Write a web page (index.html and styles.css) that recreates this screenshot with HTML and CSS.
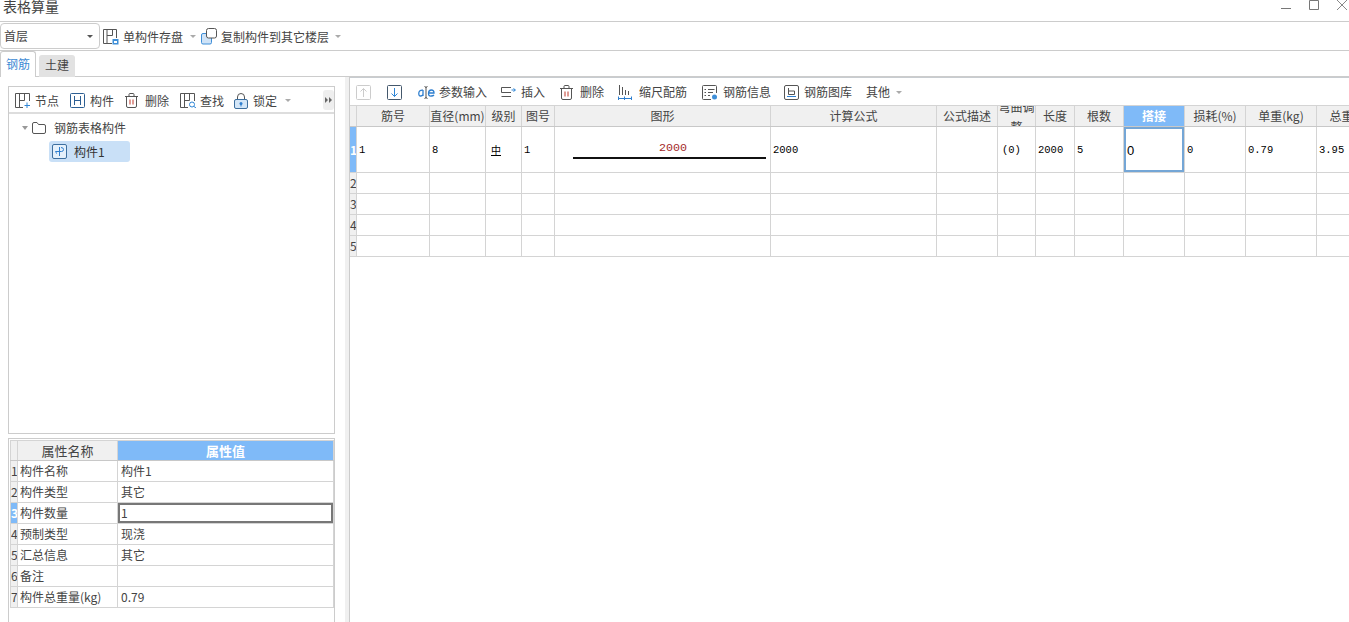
FILE: index.html
```html
<!DOCTYPE html>
<html lang="zh-CN">
<head>
<meta charset="utf-8">
<title>表格算量</title>
<link rel="stylesheet" href="styles.css">
</head>
<body>
<header class="titlebar">
  <span class="title">表格算量</span>
  <div class="winbtns">
    <svg class="win" width="12" height="12" viewBox="0 0 12 12"><path d="M1 8.500h10" stroke="#777" fill="none"/></svg>
    <svg class="win" width="12" height="12" viewBox="0 0 12 12"><path d="M1.500 0.500h9v9h-9z" stroke="#777" fill="none"/></svg>
    <svg class="win" width="12" height="12" viewBox="0 0 12 12"><path d="M1 0l10 10M11 0L1 10" stroke="#888" fill="none"/></svg>
  </div>
</header>
<div class="topbar">
  <div class="select"><span>首层</span><i class="caret dark"></i></div>
  <div class="tool t-save">
    <svg width="17" height="17" viewBox="0 0 17 17"><path d="M10 15.500H1.500V1.500H14.500V10M5 1.500V15M5 7.500H10.500V1.500" stroke="#555" fill="none"/><rect x="10.500" y="11" width="6" height="5.500" fill="#3f8fd8"/><rect x="12" y="13" width="3" height="2" fill="#fff"/></svg>
    <span>单构件存盘</span><i class="caret"></i>
  </div>
  <div class="tool t-copy">
    <svg width="17" height="17" viewBox="0 0 17 17"><rect x="0.500" y="5.500" width="10" height="10.500" rx="1.500" fill="#cfe3f7" stroke="#3f8fd8"/><rect x="5.500" y="0.500" width="10" height="9.500" rx="2" fill="#fff" stroke="#555"/></svg>
    <span>复制构件到其它楼层</span><i class="caret"></i>
  </div>
</div>
<nav class="tabs">
  <div class="tab active">钢筋</div>
  <div class="tab">土建</div>
</nav>
<main class="work">
  <aside class="left">
    <section class="treebox">
      <div class="treebar">
        <div class="tool">
          <svg width="15" height="15" viewBox="0 0 15 15"><path d="M8 14.500H0.500V0.500H14.500V8M4.500 0.500V14M4.500 7.500H9.500V0.500" stroke="#555" fill="none"/><path d="M12 9.500V15M9.500 12.500H15" stroke="#2f86d6" fill="none"/></svg>
          <span>节点</span>
        </div>
        <div class="tool">
          <svg width="15" height="15" viewBox="0 0 15 15"><rect x="0.500" y="0.500" width="14" height="14" rx="1" stroke="#2d5f93" fill="none"/><path d="M4.500 3V12M10.500 3V12M4.500 7.500H10.500" stroke="#2d5f93" fill="none"/></svg>
          <span>构件</span>
        </div>
        <div class="tool tool-del">
          <svg width="13" height="15" viewBox="0 0 13 15"><path d="M0 3.500H13M4 3.500V1.500Q4 .5 5 .5H8Q9 .5 9 1.500V3.500M1.500 3.500V13Q1.500 14.500 3 14.500H10Q11.500 14.500 11.500 13V3.500" stroke="#555" fill="none"/><path d="M5 6.500V11.500M8 6.500V11.500" stroke="#c0392b" fill="none"/></svg>
          <span>删除</span>
        </div>
        <div class="tool tool-find">
          <svg width="16" height="15" viewBox="0 0 16 15"><path d="M8 14.500H0.500V0.500H14.500V8M4.500 0.500V14M4.500 7.500H9.500V0.500" stroke="#555" fill="none"/><circle cx="12" cy="11.500" r="2.500" stroke="#2f86d6" fill="#fff"/><path d="M14 13.500L16 15" stroke="#2f86d6"/></svg>
          <span>查找</span>
        </div>
        <div class="tool">
          <svg width="14" height="16" viewBox="0 0 14 16"><path d="M3.500 7V4Q3.500 .5 7 .5T10.500 4V7" stroke="#555" fill="none"/><rect x="0.500" y="6.500" width="13" height="9" rx="1.500" fill="#d3e6f8" stroke="#3d6f9f"/><circle cx="7" cy="10.500" r="1.500" fill="#2f7fcf"/><path d="M7 11v2.500" stroke="#2f7fcf"/></svg>
          <span>锁定</span><i class="caret"></i>
        </div>
        <div class="more"><i></i><i></i></div>
      </div>
      <div class="tree">
        <div class="node root">
          <i class="caret tree-caret"></i>
          <svg width="14" height="12" viewBox="0 0 14 12"><path d="M0.500 2Q.5 .5 2 .5H5L6.500 2.500H12Q13.500 2.500 13.500 4V10Q13.500 11.500 12 11.500H2Q.5 11.500 .5 10Z" stroke="#555" fill="none"/></svg>
          <span class="root-label">钢筋表格构件</span>
        </div>
        <div class="node leaf">
          <svg width="15" height="15" viewBox="0 0 15 15"><rect x="0.500" y="0.500" width="14" height="14" rx="1.500" stroke="#3d6f9f" fill="#e4f0fb"/><path d="M7.500 3V12M3.500 7.500H9.500Q11.500 7.500 11.500 5.500T9 3.500M5 9.500Q3.500 8.500 3.500 7.500" stroke="#2f7fcf" fill="none"/></svg>
          <span>构件1</span>
        </div>
      </div>
    </section>
    <section class="propbox">
      <table class="grid props">
        <colgroup><col class="p-h"><col class="p-n"><col class="p-v"></colgroup>
        <thead>
          <tr><th></th><th>属性名称</th><th class="sel">属性值</th></tr>
        </thead>
        <tbody>
          <tr><th>1</th><td>构件名称</td><td class="v">构件1</td></tr>
          <tr><th>2</th><td>构件类型</td><td class="v">其它</td></tr>
          <tr><th class="sel">3</th><td>构件数量</td><td class="v cur-g">1</td></tr>
          <tr><th>4</th><td>预制类型</td><td class="v">现浇</td></tr>
          <tr><th>5</th><td>汇总信息</td><td class="v">其它</td></tr>
          <tr><th>6</th><td>备注</td><td class="v"></td></tr>
          <tr><th>7</th><td>构件总重量(kg)</td><td class="v">0.79</td></tr>
        </tbody>
      </table>
    </section>
  </aside>
  <div class="splitter"></div>
  <section class="right">
    <div class="rbar">
      <svg class="b-up" width="15" height="15" viewBox="0 0 15 15"><rect x="0.500" y="0.500" width="14" height="14" rx="1" stroke="#ccc" fill="none"/><path d="M7.500 12V3.500M4.500 6.500l3-3 3 3" stroke="#ccc" fill="none"/></svg>
      <svg class="b-down" width="15" height="15" viewBox="0 0 15 15"><rect x="0.500" y="0.500" width="14" height="14" rx="1" stroke="#44586c" fill="none"/><path d="M7.500 3V11.500M4.500 8.500l3 3 3-3" stroke="#2f86d6" fill="none"/></svg>
      <div class="tool b-param">
        <svg width="17" height="13" viewBox="0 0 17 13"><path d="M5 4.200Q1 3.800 .8 7T2.800 10Q4.300 10 5 8.500V4M5 8.500V10" stroke="#2f7fcf" stroke-width="1.300" fill="none"/><path d="M6.500 .5Q8 .5 8 2V11Q8 12.500 6.500 12.500M9.500 .5Q8 .5 8 2M9.500 12.500Q8 12.500 8 11" stroke="#555" fill="none"/><path d="M10.500 7H16Q16 4 13.300 4T10.500 7.200 13.300 10Q15 10 16 9" stroke="#2f7fcf" stroke-width="1.300" fill="none"/></svg>
        <span>参数输入</span>
      </div>
      <div class="tool b-ins">
        <svg width="15" height="13" viewBox="0 0 15 13"><path d="M10 1.500H.5V6.500H10M.5 10.500H10" stroke="#555" fill="none"/><path d="M10.500 4H14M12.500 2.500L14.500 4L12.500 5.500" stroke="#2f86d6" fill="none"/></svg>
        <span>插入</span>
      </div>
      <div class="tool b-del">
        <svg width="13" height="15" viewBox="0 0 13 15"><path d="M0 3.500H13M4 3.500V1.500Q4 .5 5 .5H8Q9 .5 9 1.500V3.500M1.500 3.500V13Q1.500 14.500 3 14.500H10Q11.500 14.500 11.500 13V3.500" stroke="#555" fill="none"/><path d="M5 6.500V11.500M8 6.500V11.500" stroke="#c0392b" fill="none"/></svg>
        <span>删除</span>
      </div>
      <div class="tool b-scale">
        <svg width="14" height="15" viewBox="0 0 14 15"><path d="M1.500 0V10M4.500 2V10M7.500 5V10M10.500 6V10" stroke="#555" fill="none"/><path d="M0 13.500H14M.5 11.500V15M6.500 11.500V15M13.500 11.500V15" stroke="#2f7fcf" fill="none"/></svg>
        <span>缩尺配筋</span>
      </div>
      <div class="tool b-info">
        <svg width="16" height="15" viewBox="0 0 16 15"><path d="M9 14.500H1.500Q.5 14.500 .5 13.500V1.500Q.5 .5 1.500 .5H13.500Q14.500 .5 14.500 1.500V8M2.500 4.500H4M6 4.500H12.500M2.500 7.500H4M6 7.500H11M2.500 10.500H4M6 10.500H8" stroke="#555" fill="none"/><circle cx="12.500" cy="12" r="2.500" fill="#3f8fd8"/></svg>
        <span>钢筋信息</span>
      </div>
      <div class="tool b-lib">
        <svg width="15" height="15" viewBox="0 0 15 15"><rect x="0.500" y="0.500" width="14" height="14" rx="1.500" stroke="#555" fill="none"/><path d="M4.500 3V9.500H10.500V6H4.500" stroke="#555" fill="none"/><path d="M3 11.500H12" stroke="#2f7fcf"/></svg>
        <span>钢筋图库</span>
      </div>
      <div class="tool b-other"><span>其他</span><i class="caret"></i></div>
    </div>
    <table class="grid bars">
      <colgroup>
        <col class="c-h"><col class="c1"><col class="c2"><col class="c3"><col class="c4"><col class="c5"><col class="c6"><col class="c7"><col class="c8"><col class="c9"><col class="c10"><col class="c11"><col class="c12"><col class="c13"><col class="c14">
      </colgroup>
      <thead>
        <tr>
          <th></th><th>筋号</th><th>直径(mm)</th><th>级别</th><th>图号</th><th>图形</th><th>计算公式</th><th>公式描述</th>
          <th><div class="clip"><div class="clip-text">弯曲调整</div></div></th>
          <th>长度</th><th>根数</th><th class="sel">搭接</th><th>损耗(%)</th><th>单重(kg)</th><th>总重</th>
        </tr>
      </thead>
      <tbody>
        <tr class="first">
          <th class="sel">1</th><td>1</td><td>8</td><td class="lvl">&#x4E2D;</td><td>1</td>
          <td class="shape"><div class="dim">2000</div><div class="rule"></div></td>
          <td>2000</td><td></td><td class="mid">(0)</td><td>2000</td><td>5</td><td class="cur-b">0</td><td>0</td><td>0.79</td><td>3.95</td>
        </tr>
        <tr><th>2</th><td></td><td></td><td></td><td></td><td></td><td></td><td></td><td></td><td></td><td></td><td></td><td></td><td></td><td></td></tr>
        <tr><th>3</th><td></td><td></td><td></td><td></td><td></td><td></td><td></td><td></td><td></td><td></td><td></td><td></td><td></td><td></td></tr>
        <tr><th>4</th><td></td><td></td><td></td><td></td><td></td><td></td><td></td><td></td><td></td><td></td><td></td><td></td><td></td><td></td></tr>
        <tr><th>5</th><td></td><td></td><td></td><td></td><td></td><td></td><td></td><td></td><td></td><td></td><td></td><td></td><td></td><td></td></tr>
      </tbody>
    </table>
  </section>
</main>
</body>
</html>
```
FILE: styles.css
```css
* { box-sizing: border-box; }
html, body { margin: 0; height: 622px; overflow: hidden; }
body {
  display: flex;
  flex-direction: column;
  background: #fff;
  color: #444;
  font: 12px/16px "Noto Sans CJK SC", "Liberation Sans", sans-serif;
}
.titlebar {
  height: 22px;
  flex: none;
  display: flex;
  justify-content: space-between;
  border-bottom: 1px solid #ccc;
  overflow: hidden;
}
.title { font-size: 14px; line-height: 12px; padding-left: 3px; }
.winbtns { display: flex; gap: 16px; padding-right: 1px; align-items: flex-start; }
.win { display: block; }
.topbar {
  height: 29px;
  flex: none;
  display: flex;
  align-items: center;
  border-bottom: 1px solid #ccc;
}
.select {
  width: 100px;
  height: 26px;
  border: 1px solid #ccc;
  border-radius: 4px;
  display: flex;
  align-items: center;
  justify-content: space-between;
  padding: 0 6px 0 3px;
  margin-right: 2px;
}
.tool { display: flex; align-items: center; gap: 4px; white-space: nowrap; }
.tool svg { flex: none; }
.t-save, .t-copy { padding-top: 1px; }
.t-save { margin-right: 5px; }
.t-save .caret { margin-left: 3px; }
.t-copy { gap: 3px; }
.t-copy .caret { margin-left: 3px; }
.caret {
  display: inline-block;
  width: 0;
  height: 0;
  border-left: 3px solid transparent;
  border-right: 3px solid transparent;
  border-top: 3px solid #aaa;
}
.caret.dark { border-top-color: #555; }
.tabs {
  height: 26px;
  flex: none;
  display: flex;
  align-items: flex-end;
  gap: 3px;
  border-bottom: 1px solid #ccc;
}
.tab {
  width: 36px;
  height: 22px;
  background: #e2e2e2;
  border-radius: 3px 3px 0 0;
  text-align: center;
  line-height: 20px;
  font-size: 12px;
  margin-bottom: -1px;
}
.tab.active {
  height: 26px;
  background: #fff;
  color: #3d8ad4;
  border: 1px solid #ccc;
  border-bottom: 0;
  line-height: 24px;
  position: relative;
}
.work { flex: 1; display: flex; min-height: 0; }
.left {
  width: 345px;
  flex: none;
  padding: 9px 10px 0 8px;
  display: flex;
  flex-direction: column;
  gap: 4px;
}
.treebox {
  height: 348px;
  flex: none;
  border: 1px solid #ccc;
}
.treebar {
  height: 27px;
  display: flex;
  align-items: center;
  padding: 2px 0 0 6px;
  gap: 11px;
  border-bottom: 2px solid #ddd;
  position: relative;
}
.treebar .caret { margin-left: 3px; }
.treebar .tool { gap: 5px; }
.treebar .tool-del { gap: 7px; }
.treebar .tool-find { gap: 4px; margin-right: -1px; }
.more {
  position: absolute;
  right: 0;
  top: 3px;
  width: 11px;
  height: 20px;
  background: #eee;
  border-radius: 3px;
  display: flex;
  align-items: center;
  justify-content: center;
  gap: 1px;
}
.more i {
  width: 0;
  height: 0;
  border-top: 3px solid transparent;
  border-bottom: 3px solid transparent;
  border-left: 3px solid #666;
}
.tree { padding-top: 3px; }
.node { display: flex; align-items: center; height: 21px; white-space: nowrap; }
.root { padding-left: 13px; gap: 4px; margin-bottom: 3px; }
.root-label { margin-left: 4px; }
.tree-caret { border-top-color: #999; border-top-width: 4px; }
.leaf {
  margin-left: 40px;
  width: 81px;
  height: 21px;
  background: #c9e0f7;
  border-radius: 3px;
  padding-left: 3px;
  gap: 7px;
  color: #333;
}
.propbox {
  flex: 1;
  border: 1px solid #ccc;
  border-bottom: 0;
  padding: 1px 1px 0 1px;
  min-height: 0;
}
.grid {
  border-collapse: collapse;
  table-layout: fixed;
  font-size: 12px;
  line-height: 16px;
}
.grid th, .grid td {
  border: 1px solid #d4d4d4;
  padding: 0;
  overflow: hidden;
  white-space: nowrap;
  font-weight: 400;
}
.grid thead th {
  background: #f0f0f0;
  text-align: center;
  height: 21px;
  border-bottom-color: #c8c8c8;
}
.grid tbody th { background: #f0f0f0; text-align: center; }
.grid tbody td { padding-left: 2px; }
.grid .sel { background: #7fbaf8; color: #fff; font-weight: 700; }
.props { width: 323px; }
.p-h { width: 7px; }
.p-n { width: 100px; }
.p-v { width: 216px; }
.props thead th { font-size: 13px; height: 20px; }
.props tbody tr { height: 21px; }
.props tbody td.v { padding-left: 3px; }
.cur-g { box-shadow: inset 0 0 0 2px #777; }
.splitter {
  width: 5px;
  flex: none;
  background: #f0f0f0;
  border-right: 1px solid #ccc;
}
.right { flex: 1; min-width: 0; overflow: hidden; border-top: 1px solid #c8ccd0; }
.rbar {
  height: 27px;
  display: flex;
  align-items: center;
  padding: 1px 0 0 6px;
}
.rbar .tool { gap: 5px; }
.rbar .b-param { gap: 4px; margin-right: 14px; }
.rbar .b-del, .rbar .b-scale { gap: 7px; }
.rbar .b-del { margin-right: 14px; }
.rbar .b-scale { margin-right: 15px; }
.b-up { margin-right: 16px; }
.b-down { margin-right: 16px; }
.b-ins { margin-right: 15px; }
.b-info { margin-right: 13px; }
.b-lib { margin-right: 14px; }
.b-other .caret { margin-left: 1px; }
.bars { width: 1015px; margin-left: -1px; }
.c-h { width: 7px; }
.c1 { width: 73px; }
.c2 { width: 56px; }
.c3 { width: 36px; }
.c4 { width: 33px; }
.c5 { width: 216px; }
.c6 { width: 166px; }
.c7 { width: 61px; }
.c8 { width: 38px; }
.c9 { width: 39px; }
.c10 { width: 49px; }
.c11 { width: 61px; }
.c12 { width: 61px; }
.c13 { width: 71px; }
.c14 { width: 50px; }
.bars tbody tr { height: 21px; }
.bars tbody tr.first { height: 46px; }
.bars tbody td {
  font: 10.5px/14px "Liberation Mono", monospace;
  color: #000;
  vertical-align: middle;
}
.clip { height: 20px; overflow: hidden; }
.clip-text { line-height: 20px; white-space: normal; margin-top: -9px; }
.bars tbody td.lvl { font: 10px/14px "Noto Sans CJK SC", sans-serif; padding-left: 5px; text-decoration: underline; }
.bars tbody td.shape { padding: 0 4px 0 18px; vertical-align: top; }
.bars tbody td .dim { text-align: center; color: #a52a2a; font: 11.7px/14px "Liberation Mono", monospace; margin-top: 14px; padding-left: 7px; }
.rule { height: 2px; background: #111; margin-top: 2px; }
.bars tbody td.mid { padding-left: 4px; }
.bars tbody td.cur-b {
  box-shadow: inset 0 0 0 2px #74a6d6;
  font: 13px/14px "Liberation Sans", sans-serif;
  padding: 2px 0 0 3px;
}
```
